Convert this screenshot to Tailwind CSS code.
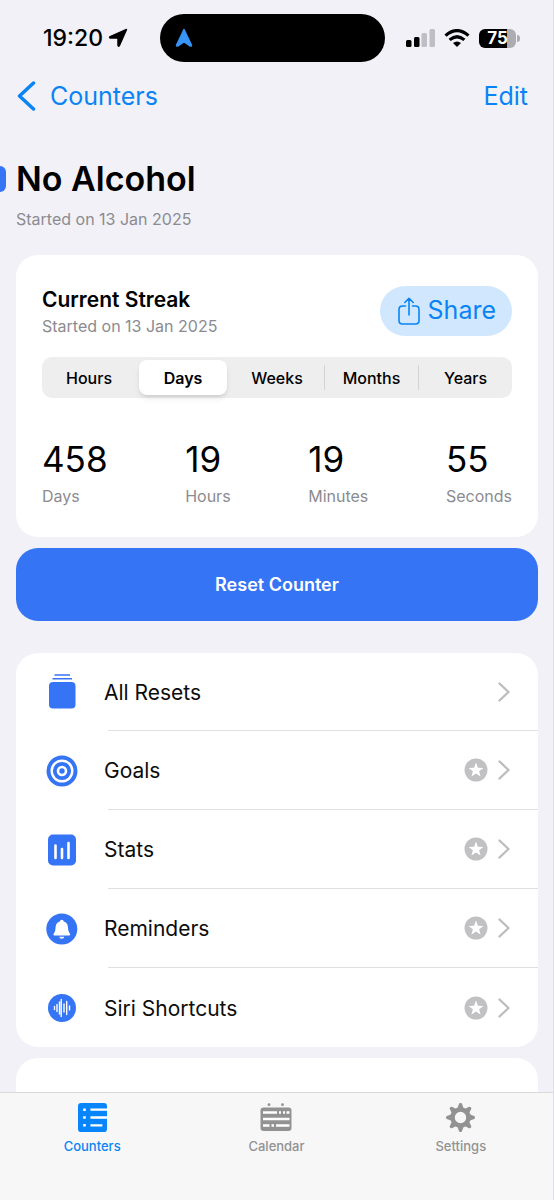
<!DOCTYPE html>
<html lang="en">
<head>
<meta charset="utf-8">
<meta name="viewport" content="width=device-width, initial-scale=1">
<title>No Alcohol</title>
<script src="https://cdn.jsdelivr.net/npm/@tailwindcss/browser@4"></script>
</head>
<body class="flex h-screen flex-col overflow-hidden border-r border-[#dedde3] bg-[#f2f1f7] font-['Inter','Liberation_Sans',sans-serif] text-black">
<svg class="hidden" aria-hidden="true">
  <symbol id="chevron" viewBox="0 0 12 20"><path d="M1.500 1.500 10.500 10 1.500 18.500" fill="none" stroke="currentColor" stroke-width="2.400" stroke-linecap="round" stroke-linejoin="round"/></symbol>
  <symbol id="star" viewBox="0 0 24 24"><circle cx="12" cy="12" r="11.500" fill="currentColor"/><path d="M12 4.500 13.900 9.700 19.400 9.900 15.100 13.200 16.600 18.500 12 15.400 7.400 18.500 8.900 13.200 4.600 9.900 10.100 9.700Z" fill="white"/></symbol>
</svg>

<header class="shrink-0">
  <div class="grid grid-cols-[1fr_225px_1fr] items-center pt-[14px] pr-2">
    <div class="flex items-center justify-end gap-[5px] pr-8">
      <span class="text-[23px] leading-7 font-medium">19:20</span>
      <svg class="size-5" viewBox="0 0 20 20"><path d="M18.500 1.500 11.300 17.600Q10.500 18.800 10 17.300V10H2.400Q.9 9.400 2.200 8.600Z" fill="black" stroke="black" stroke-width="1.500" stroke-linejoin="round"/></svg>
    </div>
    <div class="flex h-12 items-center rounded-full bg-black pl-[15px]">
      <svg class="h-5 w-[18px]" viewBox="0 0 18 20"><path d="M9 1.500 1.500 17.200Q1.600 18.600 3 17.800L9 13.700 15 17.800Q16.400 18.600 16.500 17.200Z" fill="#3795f8" stroke="#3795f8" stroke-width="1.500" stroke-linejoin="round"/></svg>
    </div>
    <div class="flex items-center gap-[9px] pl-[21px]">
      <svg class="h-[18px] w-[29px]" viewBox="0 0 29 18"><rect x="0" y="11" width="5.500" height="7" rx="1.500"/><rect x="8" y="8" width="5.500" height="10" rx="1.500"/><rect x="15.500" y="4" width="5.500" height="14" rx="1.500" fill="#bfbec4"/><rect x="23.500" y="0" width="5.500" height="18" rx="1.500" fill="#bfbec4"/></svg>
      <svg class="h-[18px] w-[26px]" viewBox="0 0 26 18"><g fill="none" stroke="black" stroke-width="3.200"><path d="M1.500 6.600Q13-3.400 24.500 6.600"/><path d="M5.600 10.900Q13 4.600 20.400 10.900"/></g><path d="M9 14Q13 10.800 17 14L13 18Z"/></svg>
      <div class="flex items-center gap-px">
        <div class="flex h-[19px] w-[37px] items-center justify-center rounded-md bg-linear-to-r from-black from-75% to-[#adacb1] to-75% text-[17px] leading-5 font-bold text-white">75</div>
        <div class="h-[7px] w-[3px] rounded-r-full bg-[#adacb1]"></div>
      </div>
    </div>
  </div>
  <nav class="flex items-center justify-between pt-4 pr-[25px] pl-[17px] text-[25px] leading-9 text-[#0a84f5]">
    <a href="#" class="flex items-center gap-[14px]">
      <svg class="h-[30px] w-[19px]" viewBox="0 0 19 30"><path d="M16.500 2 2.500 15 16.500 28" fill="none" stroke="currentColor" stroke-width="3.500" stroke-linecap="round" stroke-linejoin="round"/></svg>
      Counters
    </a>
    <button type="button">Edit</button>
  </nav>
</header>

<main class="min-h-0 flex-1 overflow-hidden pt-[43px] pr-[15px] pl-4">
  <div class="-ml-4 flex items-center gap-[10px]">
    <span class="h-[26px] w-[6px] rounded-r-lg bg-[#3574f5]"></span>
    <h1 class="text-[34px] leading-11 font-semibold">No Alcohol</h1>
  </div>
  <p class="mt-2 text-[16px] leading-5 text-[#8b8b90]">Started on 13 Jan 2025</p>

  <section class="mt-[26px] rounded-[22px] bg-white px-[26px] pt-[31px] pb-[29px]">
    <div class="flex items-start justify-between">
      <div>
        <h2 class="text-[21px] leading-7 font-semibold">Current Streak</h2>
        <p class="text-[16px] leading-6 text-[#8b8b90]">Started on 13 Jan 2025</p>
      </div>
      <button type="button" class="flex h-[50px] items-center gap-2 rounded-full bg-[#d0e7fd] pr-4 pl-[18px] text-[25px] text-[#0a84f5]">
        <svg class="h-7 w-[22px]" viewBox="0 0 22 28" fill="none" stroke="currentColor" stroke-width="1.600" stroke-linecap="round" stroke-linejoin="round"><path d="M7.500 9H4.500Q1 9 1 12.500V23.500Q1 27 4.500 27H17.500Q21 27 21 23.500V12.500Q21 9 17.500 9H14.500M11 18V1.500M6.800 5.500 11 1.300 15.200 5.500"/></svg>
        Share
      </button>
    </div>
    <fieldset class="mt-[19px] grid h-[41px] grid-cols-5 rounded-[10px] bg-[#eeeeef] text-[16px] font-medium">
      <label class="flex items-center justify-center"><input type="radio" name="unit" class="sr-only">Hours</label>
      <label class="m-[3px] flex items-center justify-center rounded-lg bg-white font-semibold shadow-md"><input type="radio" name="unit" class="sr-only" checked>Days</label>
      <label class="flex items-center justify-center"><input type="radio" name="unit" class="sr-only">Weeks</label>
      <label class="my-2 flex items-center justify-center border-l border-[#d4d4d7]"><input type="radio" name="unit" class="sr-only">Months</label>
      <label class="my-2 flex items-center justify-center border-l border-[#d4d4d7]"><input type="radio" name="unit" class="sr-only">Years</label>
    </fieldset>
    <dl class="mt-[39px] flex justify-between text-[16px] leading-6 text-[#8b8b90]">
      <div class="flex flex-col-reverse gap-[3px]"><dt>Days</dt><dd class="text-[35px] leading-11 text-black">458</dd></div>
      <div class="flex flex-col-reverse gap-[3px]"><dt>Hours</dt><dd class="text-[35px] leading-11 text-black">19</dd></div>
      <div class="flex flex-col-reverse gap-[3px]"><dt>Minutes</dt><dd class="text-[35px] leading-11 text-black">19</dd></div>
      <div class="flex flex-col-reverse gap-[3px]"><dt>Seconds</dt><dd class="text-[35px] leading-11 text-black">55</dd></div>
    </dl>
  </section>

  <button type="button" class="mt-[11px] h-[73px] w-full rounded-[22px] bg-[#3574f5] text-[18px] font-semibold text-white">Reset Counter</button>

  <ul class="mt-8 overflow-hidden rounded-[22px] bg-white text-[21px] text-[#0c0c0c]">
    <li><a href="#" class="flex items-center pl-[30px]">
      <svg class="h-9 w-8" viewBox="0 0 32 36" fill="#3574f5"><rect x="3" y="8" width="26.500" height="26.500" rx="4"/><path d="M8.500 1H24M6.500 4.800H26" stroke="#3574f5" stroke-width="1.400"/></svg>
      <span class="ml-[30px] flex h-[78px] flex-1 items-center border-b border-[#e0e0e2] pr-7"><span class="-ml-1 flex-1 pt-[2px]">All Resets</span><svg class="h-5 w-3 text-[#bdbdc0]"><use href="#chevron"/></svg></span>
    </a></li>
    <li><a href="#" class="flex items-center pl-[30px]">
      <svg class="size-8" viewBox="0 0 32 32" fill="none" stroke="#3574f5"><circle cx="16" cy="16" r="13.500" stroke-width="4"/><circle cx="16" cy="16" r="7.200" stroke-width="3.800"/><circle cx="16" cy="16" r="2.700" fill="#3574f5" stroke="none"/></svg>
      <span class="ml-[30px] flex h-[79px] flex-1 items-center border-b border-[#e0e0e2] pr-7"><span class="-ml-1 flex-1 pt-[2px]">Goals</span><svg class="mr-[10px] size-6 text-[#c1c1c4]"><use href="#star"/></svg><svg class="h-5 w-3 text-[#bdbdc0]"><use href="#chevron"/></svg></span>
    </a></li>
    <li><a href="#" class="flex items-center pl-[30px]">
      <svg class="size-8" viewBox="0 0 32 32"><rect x="2" y=".5" width="28" height="31" rx="5" fill="#3574f5"/><path d="M9.500 11.500V24M16 15V24M22.500 9V24" stroke="white" stroke-width="2.600" stroke-linecap="round"/></svg>
      <span class="ml-[30px] flex h-[79px] flex-1 items-center border-b border-[#e0e0e2] pr-7"><span class="-ml-1 flex-1 pt-[2px]">Stats</span><svg class="mr-[10px] size-6 text-[#c1c1c4]"><use href="#star"/></svg><svg class="h-5 w-3 text-[#bdbdc0]"><use href="#chevron"/></svg></span>
    </a></li>
    <li><a href="#" class="flex items-center pl-[30px]">
      <svg class="size-8" viewBox="0 0 32 32"><circle cx="15.800" cy="16" r="15.500" fill="#3574f5"/><path d="M15.800 6.800Q17.600 6.800 17.800 8.500C21.600 9.500 22 13 22.200 16.500 22.400 19.500 24 20 24.200 21.500Q24.200 22.600 23 22.600H8.600Q7.400 22.600 7.400 21.500C7.600 20 9.200 19.500 9.400 16.500 9.600 13 10 9.500 13.800 8.500Q14 6.800 15.800 6.800ZM13.300 23.800H18.300Q18 25.800 15.800 25.800 13.600 25.800 13.300 23.800Z" fill="white"/></svg>
      <span class="ml-[30px] flex h-[79px] flex-1 items-center border-b border-[#e0e0e2] pr-7"><span class="-ml-1 flex-1 pt-[2px]">Reminders</span><svg class="mr-[10px] size-6 text-[#c1c1c4]"><use href="#star"/></svg><svg class="h-5 w-3 text-[#bdbdc0]"><use href="#chevron"/></svg></span>
    </a></li>
    <li><a href="#" class="flex items-center pl-[30px]">
      <svg class="size-8" viewBox="0 0 32 32"><circle cx="16" cy="16" r="14" fill="#3574f5"/><path d="M8.500 14.500V17.500M11 12.500V19.500M13.500 10V22M15.200 7.500V24.500M18 12V20M20.700 9.500V22.500M23.500 14V18" stroke="white" stroke-width="1.400" stroke-linecap="round"/></svg>
      <span class="ml-[30px] flex h-[79px] flex-1 items-center pr-7"><span class="-ml-1 flex-1 pt-[2px]">Siri Shortcuts</span><svg class="mr-[10px] size-6 text-[#c1c1c4]"><use href="#star"/></svg><svg class="h-5 w-3 text-[#bdbdc0]"><use href="#chevron"/></svg></span>
    </a></li>
  </ul>
  <section class="mt-[11px] h-24 rounded-[22px] bg-white"></section>
</main>

<nav class="grid h-[108px] shrink-0 grid-cols-3 border-t border-[#d8d9da] bg-[#f7f7f8] text-[13px] leading-4 font-medium text-[#929292]">
  <a href="#" class="flex flex-col items-center gap-[6px] pt-[10px] text-[#0a84f5]">
    <svg class="h-[29px] w-[29px]" viewBox="0 0 28 28"><rect width="28" height="28" rx="3" fill="#0885fb"/><path d="M12 6.500H28M12 14H28M12 21.500H23.500" stroke="white" stroke-width="2.200"/><path d="M5 6.500H7.500M5 14H7.500M5 21.500H7.500" stroke="white" stroke-width="2.600"/></svg>
    Counters
  </a>
  <a href="#" class="flex flex-col items-center gap-[6px] pt-[10px]">
    <svg class="h-[29px] w-8" viewBox="0 0 32 29"><circle cx="9" cy="1.700" r="1.400" fill="#929292"/><circle cx="22.500" cy="1.700" r="1.400" fill="#929292"/><rect x=".5" y="4.500" width="31" height="23.500" rx="3" fill="#929292"/><path d="M3 9.500H17M19 9.500H21M23 9.500H25M26.500 9.500H29.500M3 16H29.500M3 22.500H9.500M11.500 22.500H14M16 22.500H29.500" stroke="white" stroke-width="2.400"/></svg>
    Calendar
  </a>
  <a href="#" class="flex flex-col items-center gap-[6px] pt-[10px]">
    <svg class="h-[29px] w-[29px]" viewBox="-14 -14 28 28"><circle r="7.700" fill="none" stroke="#929292" stroke-width="4.400"/><g fill="#929292" stroke="#929292" stroke-width="2.200" stroke-linejoin="round"><path id="tooth" d="M-2-8.300-.4-12.800H.4L2-8.300Z"/><use href="#tooth" transform="rotate(45)"/><use href="#tooth" transform="rotate(90)"/><use href="#tooth" transform="rotate(135)"/><use href="#tooth" transform="rotate(180)"/><use href="#tooth" transform="rotate(225)"/><use href="#tooth" transform="rotate(270)"/><use href="#tooth" transform="rotate(315)"/></g></svg>
    Settings
  </a>
</nav>
</body>
</html>
